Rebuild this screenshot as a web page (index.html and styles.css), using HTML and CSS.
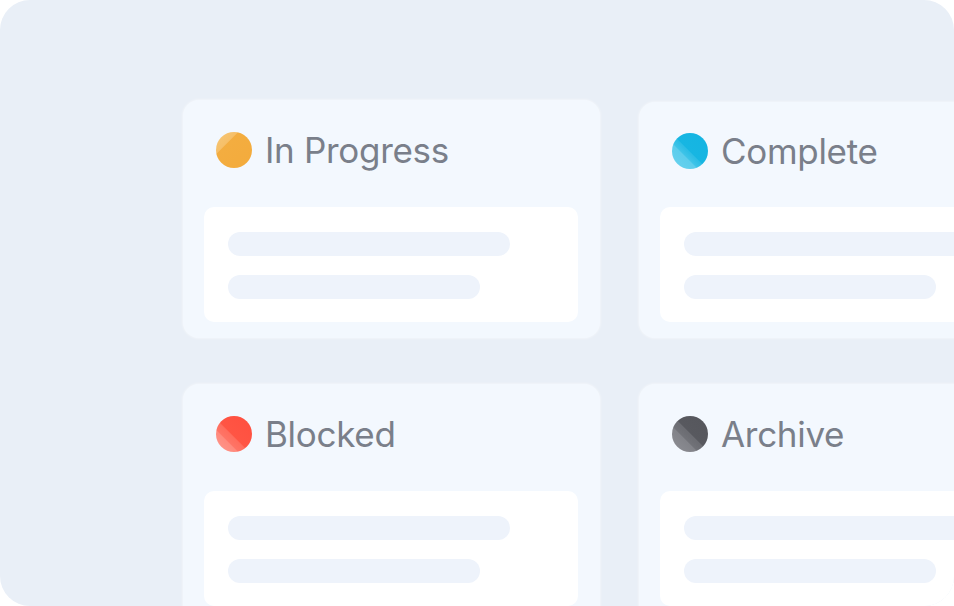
FILE: index.html
```html
<!DOCTYPE html>
<html lang="en">
<head>
  <meta charset="UTF-8">
  <title>Board</title>
  <link rel="stylesheet" href="styles.css">
</head>
<body>

<div class="board">
  <div class="grid">
    <!-- In Progress -->
    <div class="column">
      <div class="column-head">
        <span class="dot dot-orange"></span>
        <span class="column-title">In Progress</span>
      </div>
      <div class="task">
        <div class="bar bar-long"></div>
        <div class="bar bar-short"></div>
      </div>
    </div>

    <!-- Complete -->
    <div class="column">
      <div class="column-head">
        <span class="dot dot-blue"></span>
        <span class="column-title">Complete</span>
      </div>
      <div class="task">
        <div class="bar bar-long"></div>
        <div class="bar bar-short"></div>
      </div>
    </div>

    <!-- Blocked -->
    <div class="column">
      <div class="column-head">
        <span class="dot dot-red"></span>
        <span class="column-title">Blocked</span>
      </div>
      <div class="task">
        <div class="bar bar-long"></div>
        <div class="bar bar-short"></div>
      </div>
    </div>

    <!-- Archive -->
    <div class="column">
      <div class="column-head">
        <span class="dot dot-gray"></span>
        <span class="column-title">Archive</span>
      </div>
      <div class="task">
        <div class="bar bar-long"></div>
        <div class="bar bar-short"></div>
      </div>
    </div>
  </div>
</div>

</body>
</html>
```

FILE: styles.css
```css
html, body {
  margin: 0;
  background: #ffffff;
  font-family: Inter, "Noto Sans", sans-serif;
}

.board {
  width: 954px;
  height: 606px;
  background: #e9eff7;
  border-radius: 30px;
  overflow: hidden;
  box-sizing: border-box;
  padding: 100px 0 0 183px;
}

.grid {
  display: grid;
  grid-template-columns: 417px 417px;
  grid-auto-rows: 238px;
  column-gap: 39px;
  row-gap: 46px;
}

.column {
  background: #f3f8fe;
  border-radius: 16px;
  padding: 0 22px 16px 21px;
  box-shadow: 0 0 3px rgba(255,255,255,0.8);
  display: flex;
  flex-direction: column;
}

.column:nth-child(2) {
  margin-top: 2px;
}

.column-head {
  display: flex;
  align-items: center;
  gap: 13px;
  height: 100px;
  padding-left: 12px;
  margin-bottom: 7px;
}

.column-title {
  font-size: 35px;
  color: #7a7f8a;
  letter-spacing: -0.3px;
}

.dot {
  width: 36px;
  height: 36px;
  border-radius: 50%;
  flex-shrink: 0;
}

.dot-orange {
  background: linear-gradient(135deg, #f7c878 0%, #f6bf68 30%, #f3ad40 32%, #f3ab3c 100%);
}

.dot-blue {
  background: linear-gradient(45deg, #6ad3ef 0%, #5ccdec 35%, #3ec4e8 37%, #2cbde5 48%, #17b6e2 50%, #14b4e2 100%);
}

.dot-red {
  background: linear-gradient(45deg, #ff9a8f 0%, #ff8a7d 30%, #ff7466 32%, #ff6d5d 45%, #ff5544 47%, #ff4f3f 100%);
}

.dot-gray {
  background: linear-gradient(45deg, #8e8f95 0%, #828389 35%, #717278 37%, #6b6c72 50%, #58595f 52%, #55565c 100%);
}

.task {
  background: #ffffff;
  border-radius: 10px;
  padding: 25px 24px 23px;
  display: flex;
  flex-direction: column;
  gap: 19px;
}

.bar {
  height: 24px;
  border-radius: 12px;
  background: #eef3fb;
}

.bar-long {
  width: 282px;
}

.bar-short {
  width: 252px;
}
```
